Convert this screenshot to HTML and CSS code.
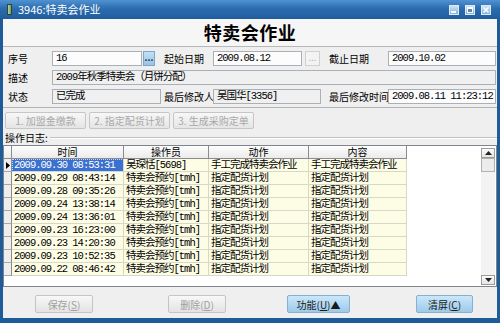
FILE: index.html
```html
<!DOCTYPE html>
<html lang="zh-CN">
<head>
  <meta charset="UTF-8">
  <meta name="viewport" content="width=device-width, initial-scale=1.0">
  <title>3946:特卖会作业</title>
  <link rel="stylesheet" href="styles.css">
</head>
<body>
  <div class="window">
    <div class="titlebar">
      <span class="app-icon"></span>
      <span class="caption">3946:特卖会作业</span>
      <div class="win-buttons">
        <span class="win-btn"><svg width="8" height="8" viewBox="0 0 8 8"><rect x="1" y="5" width="5" height="2" fill="#fff"/></svg></span>
        <span class="win-btn"><svg width="8" height="8" viewBox="0 0 8 8"><rect x="1.5" y="1.5" width="5" height="5" fill="#5d87b3" stroke="#fff"/><rect x="1" y="1" width="6" height="2" fill="#fff"/></svg></span>
        <span class="win-btn"><svg width="8" height="8" viewBox="0 0 8 8"><path d="M1.5 1.5 L6.5 6.5 M6.5 1.5 L1.5 6.5" stroke="#fff" stroke-width="1.6"/></svg></span>
      </div>
    </div>

    <div class="client">
      <header class="page-head">
        <h1>特卖会作业</h1>
      </header>

      <div class="form">
        <label>序号</label>
        <div class="field">
          <span class="input white">16</span>
          <span class="pick">...</span>
        </div>
        <label class="lbl2">起始日期</label>
        <div class="field field2">
          <span class="input white">2009.08.12</span>
          <span class="pick off">...</span>
        </div>
        <label class="lbl3">截止日期</label>
        <span class="input white">2009.10.02</span>

        <label>描述</label>
        <span class="input wide">2009年秋季特卖会（月饼分配）</span>

        <label>状态</label>
        <span class="input">已完成</span>
        <label class="lbl2">最后修改人</label>
        <span class="input">吴国华[3356]</span>
        <label class="lbl3">最后修改时间</label>
        <span class="input white">2009.08.11 11:23:12</span>
      </div>

      <div class="steps">
        <button class="step" disabled>1. 加盟金缴款</button>
        <button class="step" disabled>2. 指定配货计划</button>
        <button class="step" disabled>3. 生成采购定单</button>
      </div>

      <div class="log-title">
        <span>操作日志:</span>
        <span class="rule"></span>
      </div>

      <div class="grid">
        <div class="grid-rows">
          <div class="row head">
            <div class="cell ind"></div>
            <div class="cell">时间</div>
            <div class="cell">操作员</div>
            <div class="cell">动作</div>
            <div class="cell">内容</div>
          </div>
          <div class="row">
            <div class="cell ind"><svg width="4" height="7" viewBox="0 0 4 7"><path d="M0 0 L4 3.5 L0 7Z" fill="#000"/></svg></div>
            <div class="cell selected">2009.09.30 08:53:31</div>
            <div class="cell">吴琛恬[5698]</div>
            <div class="cell">手工完成特卖会作业</div>
            <div class="cell">手工完成特卖会作业</div>
          </div>
          <div class="row">
            <div class="cell ind"></div>
            <div class="cell">2009.09.29 08:43:14</div>
            <div class="cell">特卖会预约[tmh]</div>
            <div class="cell">指定配货计划</div>
            <div class="cell">指定配货计划</div>
          </div>
          <div class="row">
            <div class="cell ind"></div>
            <div class="cell">2009.09.28 09:35:26</div>
            <div class="cell">特卖会预约[tmh]</div>
            <div class="cell">指定配货计划</div>
            <div class="cell">指定配货计划</div>
          </div>
          <div class="row">
            <div class="cell ind"></div>
            <div class="cell">2009.09.24 13:38:14</div>
            <div class="cell">特卖会预约[tmh]</div>
            <div class="cell">指定配货计划</div>
            <div class="cell">指定配货计划</div>
          </div>
          <div class="row">
            <div class="cell ind"></div>
            <div class="cell">2009.09.24 13:36:01</div>
            <div class="cell">特卖会预约[tmh]</div>
            <div class="cell">指定配货计划</div>
            <div class="cell">指定配货计划</div>
          </div>
          <div class="row">
            <div class="cell ind"></div>
            <div class="cell">2009.09.23 16:23:00</div>
            <div class="cell">特卖会预约[tmh]</div>
            <div class="cell">指定配货计划</div>
            <div class="cell">指定配货计划</div>
          </div>
          <div class="row">
            <div class="cell ind"></div>
            <div class="cell">2009.09.23 14:20:30</div>
            <div class="cell">特卖会预约[tmh]</div>
            <div class="cell">指定配货计划</div>
            <div class="cell">指定配货计划</div>
          </div>
          <div class="row">
            <div class="cell ind"></div>
            <div class="cell">2009.09.23 10:52:35</div>
            <div class="cell">特卖会预约[tmh]</div>
            <div class="cell">指定配货计划</div>
            <div class="cell">指定配货计划</div>
          </div>
          <div class="row">
            <div class="cell ind"></div>
            <div class="cell">2009.09.22 08:46:42</div>
            <div class="cell">特卖会预约[tmh]</div>
            <div class="cell">指定配货计划</div>
            <div class="cell">指定配货计划</div>
          </div>
        </div>
        <div class="scrollbar">
          <span class="sb-btn"><svg width="7" height="4" viewBox="0 0 7 4"><path d="M3.5 0 L7 4 H0Z" fill="#222"/></svg></span>
          <span class="sb-thumb"></span>
          <span class="sb-btn down"><svg width="7" height="4" viewBox="0 0 7 4"><path d="M0 0 H7 L3.5 4Z" fill="#222"/></svg></span>
        </div>
      </div>

      <div class="footer">
        <button class="btn" disabled>保存(<u>S</u>)</button>
        <button class="btn" disabled>删除(<u>D</u>)</button>
        <button class="btn blue">功能(<u>U</u>)▲</button>
        <button class="btn blue">清屏(<u>C</u>)</button>
      </div>
    </div>
  </div>
</body>
</html>
```

FILE: styles.css
```css
* {
  box-sizing: border-box;
}
body {
  margin: 0;
  width: 500px;
  height: 323px;
  overflow: hidden;
  font-family: "Noto Sans CJK SC", sans-serif;
  font-size: 10px;
  color: #000;
}
.window {
  width: 500px;
  height: 323px;
  display: flex;
  flex-direction: column;
  background: #1f5b99;
  padding: 0 3px 5px;
}
.titlebar {
  height: 19px;
  margin: 0 -3px;
  padding: 0 9px 0 7px;
  display: flex;
  align-items: center;
  background: linear-gradient(to bottom, #4f92d2, #2c6cae 45%, #1f5d9e);
}
.app-icon {
  width: 5px;
  height: 11px;
  margin-right: 6px;
  background: linear-gradient(to right, #b9d3b1, #6f9868);
  border: 1px solid #2d4a2d;
}
.caption {
  color: #fff;
  font-size: 11px;
  line-height: 19px;
}
.win-buttons {
  margin-left: auto;
  display: flex;
  gap: 6px;
}
.win-btn {
  width: 10px;
  height: 10px;
  display: flex;
  align-items: center;
  justify-content: center;
  background: linear-gradient(to bottom, #c9e0f4, #86b2dc);
  border: 1px solid #dcebf8;
}
.client {
  flex: 1;
  display: flex;
  flex-direction: column;
  background: #efefef;
}
.page-head {
  height: 28px;
  background: #f6f6f6;
  border-bottom: 1px solid #b8b8b8;
  text-align: center;
}
.page-head h1 {
  margin: 0;
  font-size: 18px;
  font-weight: bold;
  line-height: 27px;
  letter-spacing: 0.5px;
}
.form {
  display: grid;
  grid-template-columns: 44px 109px 52px 108px 67px 108px;
  grid-auto-rows: 15px;
  row-gap: 4px;
  padding: 4px 1px 3px 5px;
  border-bottom: 1px solid #b4b4b4;
}
.form label {
  line-height: 15px;
  white-space: nowrap;
}
.form .lbl2 {
  padding-left: 3px;
}
.form .lbl3 {
  padding-left: 8px;
}
.input {
  height: 15px;
  padding: 0 3px;
  border: 1px solid #aab0b8;
  background: #f0f0f0;
  font-family: "Liberation Mono", "Noto Sans CJK SC", monospace;
  font-size: 10.5px;
  letter-spacing: -1px;
  line-height: 13px;
  white-space: nowrap;
  overflow: hidden;
}
.input.white {
  background: #fcfcfc;
}
.input.wide {
  grid-column: 2 / 7;
}
.field {
  display: flex;
  gap: 1px;
}
.field .input {
  width: 90px;
}
.field2 {
  gap: 3px;
}
.field2 .input {
  width: 89px;
}
.pick {
  width: 12px;
  height: 15px;
  background: linear-gradient(to bottom, #c4e0f4, #98c4e6);
  border: 1px solid #7ea6c8;
  font-size: 9px;
  font-weight: bold;
  line-height: 11px;
  text-align: center;
  color: #1c2c44;
}
.pick.off {
  width: 15px;
  background: #f3f3f3;
  border-color: #d0d0d0;
  color: #b4b4b4;
  font-weight: normal;
}
.steps {
  display: flex;
  gap: 3px;
  padding: 4px 2px 2px;
}
.step {
  width: 81px;
  height: 17px;
  padding: 0;
  font-family: "Noto Sans CJK SC", sans-serif;
  font-size: 10px;
  color: #a8a8a8;
  background: linear-gradient(to bottom, #f7f7f7, #e5e5e5);
  border: 1px solid #c6c6c6;
  border-radius: 2px;
}
.log-title {
  height: 14px;
  display: flex;
  align-items: center;
  gap: 2px;
  padding-left: 2px;
  line-height: 14px;
}
.log-title .rule {
  flex: 1;
  height: 2px;
  border-top: 1px solid #c2c2c2;
  border-bottom: 1px solid #fff;
}
.grid {
  height: 142px;
  display: flex;
  background: #fff;
  border: 1px solid #7f858c;
}
.grid-rows {
  flex: 1;
}
.row {
  display: grid;
  grid-template-columns: 8px 112px 85px 100px 98px;
  height: 13px;
}
.cell {
  padding-left: 2px;
  border-right: 1px solid #d8d8c6;
  border-bottom: 1px solid #d8d8c6;
  background: #fdfde6;
  font-family: "Liberation Mono", "Noto Sans CJK SC", monospace;
  font-size: 10.5px;
  letter-spacing: -1px;
  line-height: 12px;
  white-space: nowrap;
  overflow: hidden;
}
.row.head .cell {
  padding-left: 0;
  text-align: center;
  background: linear-gradient(to bottom, #fdfdfd, #ebebeb);
  border-right-color: #8c8c8c;
  border-bottom-color: #8c8c8c;
  font-family: "Noto Sans CJK SC", sans-serif;
  font-size: 10px;
  letter-spacing: 0;
  line-height: 12px;
  overflow: visible;
}
.cell.ind {
  padding: 0;
  display: flex;
  align-items: center;
  justify-content: center;
  background: #eeeeee;
  border-right-color: #8c8c8c;
  border-bottom-color: #a8a8a8;
}
.cell.selected {
  color: #fff;
  background: #3a70cf;
  outline: 1px dotted #c8d8f4;
  outline-offset: -1px;
}
.scrollbar {
  width: 14px;
  margin: 2px 1px 1px 0;
  display: flex;
  flex-direction: column;
  background: #f3f3f3;
}
.sb-btn {
  height: 10px;
  display: flex;
  align-items: center;
  justify-content: center;
  background: linear-gradient(to bottom, #fbfbfb, #e4e4e4);
  border: 1px solid #9c9c9c;
}
.sb-btn.down {
  margin-top: auto;
}
.sb-thumb {
  height: 14px;
  background: #ececec;
  border: 1px solid #b0b0b0;
}
.footer {
  flex: 1;
  display: flex;
  align-items: flex-start;
  padding: 8px 0 0 32px;
}
.btn {
  width: 58px;
  height: 18px;
  padding: 0;
  font-family: "Noto Sans CJK SC", sans-serif;
  font-size: 10px;
  color: #a0a0a0;
  background: linear-gradient(to bottom, #f8f8f8, #e3e3e3);
  border: 1px solid #c4c4c4;
  border-radius: 2px;
}
.btn:nth-child(2) {
  margin-left: 75px;
}
.btn:nth-child(3) {
  width: 63px;
  margin-left: 61px;
}
.btn:nth-child(4) {
  width: 57px;
  margin-left: 66px;
}
.btn.blue {
  color: #1a1a1a;
  background: linear-gradient(to bottom, #cbe7f9, #9ccaea);
  border-color: #86b0d0;
}
```
